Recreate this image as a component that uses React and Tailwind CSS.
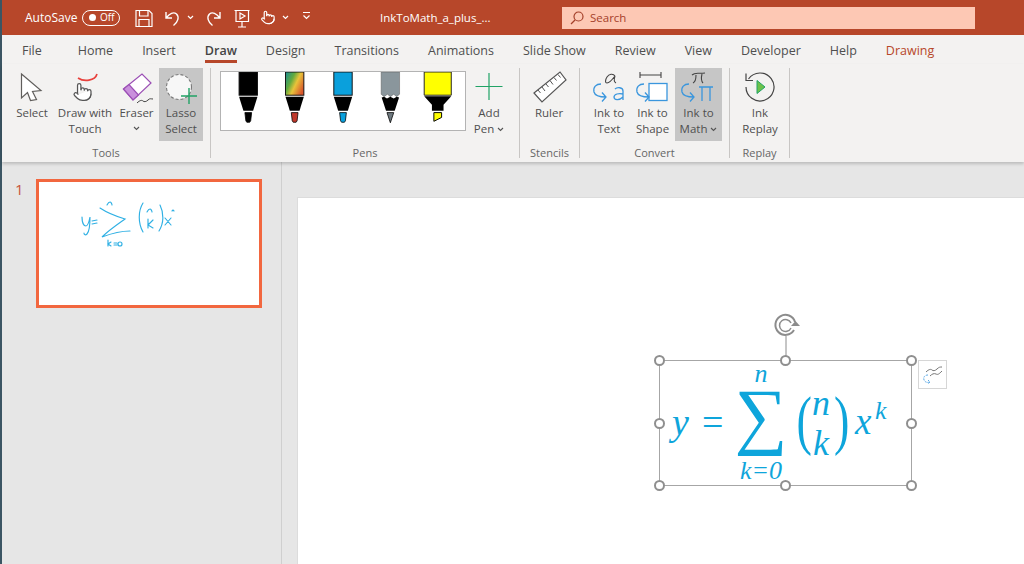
const tabs = ["File", "Home", "Insert", "Draw", "Design", "Transitions", "Animations", "Slide Show", "Review", "View", "Developer", "Help", "Drawing"]

function Chevron({ className = "" }) {
  return (
    <svg width="7" height="5" viewBox="0 0 7 5" className={className}>
      <path d="M1 1l2.5 2.5L6 1" fill="none" stroke="#555" strokeWidth="1.1" />
    </svg>
  )
}

function HandPaths() {
  return (
    <>
      <path d="M22 14a8 8 0 0 1-8 8" />
      <path d="M18 11v-1a2 2 0 0 0-2-2a2 2 0 0 0-2 2" />
      <path d="M14 10V9a2 2 0 0 0-2-2a2 2 0 0 0-2 2v1" />
      <path d="M10 9.5V4a2 2 0 0 0-2-2a2 2 0 0 0-2 2v10" />
      <path d="M18 11a2 2 0 1 1 4 0v3a8 8 0 0 1-8 8h-2c-2.8 0-4.5-.86-5.99-2.34l-3.6-3.6a2 2 0 0 1 2.83-2.82L7 15" />
    </>
  )
}

function TitleIcons() {
  return (
    <svg width="190" height="35" viewBox="130 0 190 35" className="ml-[10px] shrink-0" fill="none" stroke="#fff" strokeWidth="1.2">
      <path d="M136 10.5h13l3 3v13h-16z" />
      <path d="M139.500 10.500v5.500h8.500v-5.500M139 26.500v-7h10v7" />
      <path d="M166 12v6h6M166.500 17.500c3-4 7-6 10-3.500 3 3 1.500 8-3 11.500" strokeWidth="1.4" />
      <path d="M188 16l2.500 2.500 2.500-2.500" />
      <path d="M220 12v6h-6M219.500 17.500c-3-4-7-6-10-3.500-3 3-1.500 8 3 11.500" strokeWidth="1.4" />
      <path d="M234.500 10.500h15M236 10.500v11h12.500v-11M242 21.500v5M238 27h8" />
      <path d="M240 13l5 3-5 3z" />
      <g transform="translate(260.500 10) scale(0.62)" strokeWidth="1.9">
        <HandPaths />
      </g>
      <path d="M283 16l2.500 2.500 2.500-2.500" />
      <path d="M303 12.500h7M303.500 15.500l3 3 3-3" />
    </svg>
  )
}

function Btn({ width, box, lines, active, chevron, children }) {
  return (
    <div className={`${width} ${active ? "bg-[#c6c6c6]" : ""} flex h-[73px] shrink-0 flex-col items-center`}>
      <svg viewBox={box} className="h-[37px] w-full shrink-0" fill="none">
        {children}
      </svg>
      {lines.map((line, i) => (
        <div key={line} className="flex items-center gap-[3px] whitespace-nowrap text-[11.5px] leading-4">
          {line}
          {chevron && i === lines.length - 1 && lines.length > 1 && <Chevron />}
        </div>
      ))}
      {chevron && lines.length === 1 && <Chevron className="mt-[5px]" />}
    </div>
  )
}

function Group({ width, label, padding, children }) {
  return (
    <div className={`${width} flex shrink-0 items-start`}>
      <div className="flex min-w-0 flex-1 flex-col">
        <div className={`${padding} flex h-[73px] items-start`}>{children}</div>
        <div className="mt-[2px] text-center text-[11px] leading-5 text-[#666]">{label}</div>
      </div>
      <div className="h-[90px] w-px shrink-0 bg-[#c8c6c4]" />
    </div>
  )
}

function Pen({ x, body, nib, gradient, jagged, wide }) {
  if (wide) {
    return (
      <g>
        <path d={`M${x - 14} 71h28v24h-28z`} fill={body} stroke="#222" strokeWidth="1" />
        <path d={`M${x - 14} 96h28l-8 9v6h-12v-6z`} fill="#000" />
        <path d={`M${x - 4} 113h8v5l-8 4z`} fill="#ffff00" stroke="#000" strokeWidth="1" />
      </g>
    )
  }
  return (
    <g>
      {jagged ? (
        <>
          <path d={`M${x - 9.500} 71h19v23l-3 2.500-3-2.500-3.500 2.500-3-2.500-3.500 2.500-3-2.500z`} fill={body} stroke="#555" strokeWidth="0.500" />
          <path d={`M${x - 9} 97.500l2.500-1 3 2 3.500-2 3.500 2 3-2 2.500 1-4.500 13.500h-9z`} fill="#000" />
          <path d={`M${x - 3.500} 113h7l-3.500 10.500z`} fill={nib} stroke="#000" strokeWidth="0.800" />
        </>
      ) : (
        <>
          <rect x={x - 9.500} y="71" width="19" height="24" fill={gradient ? "url(#rainbow)" : body} stroke="#111" strokeWidth="1" />
          <path d={`M${x - 9.500} 96.500h19l-4.500 14.500h-10z`} fill="#000" />
          <path d={`M${x - 3.500} 113h7l-1 8.500-1 1.500h-3l-1-1.500z`} fill={nib} stroke="#000" strokeWidth="0.800" />
        </>
      )}
    </g>
  )
}

function BlueArrow({ x, y }) {
  return (
    <path
      d={`M${x + 4} ${y}c-5 0-8 3-7 8 1 4 5 5 12 5M${x + 5} ${y + 8.500}l4 4.500-4 4.500`}
      stroke="#3a96dd"
      strokeWidth="1.3"
    />
  )
}

function Handle({ className }) {
  return <span className={`${className} absolute h-[11px] w-[11px] rounded-full border-2 border-[#8f8f8f] bg-white`} />
}

export default function App() {
  return (
    <div className="relative flex h-[564px] w-[1024px] overflow-hidden bg-[#e6e6e6] font-['Open_Sans',sans-serif] text-[#4f4f4f]">
      <div className="w-[2px] shrink-0 bg-[#3b5563]" />

      <div className="flex min-w-0 flex-1 flex-col">
        {/* title bar */}
        <div className="flex h-[35px] shrink-0 items-center bg-[#b7472a] text-white">
          <span className="ml-[23px] w-[57px] text-[12px]">AutoSave</span>
          <div className="flex h-[16px] w-[38px] items-center rounded-full border border-white pl-[6px]">
            <span className="h-[7px] w-[7px] rounded-full bg-white" />
            <span className="ml-[4px] text-[10px]">Off</span>
          </div>
          <TitleIcons />
          <span className="ml-[60px] w-[182px] text-[11.5px]">InkToMath_a_plus_...</span>
          <div className="flex h-[22px] w-[413px] items-center gap-[6px] bg-[#fdc8b4] pl-[8px] text-[11.5px] text-[#a4402a]">
            <svg width="14" height="14" viewBox="0 0 14 14" fill="none" stroke="#a4402a" strokeWidth="1.200">
              <circle cx="8.500" cy="5.500" r="4.500" />
              <path d="M5 9l-4 4" />
            </svg>
            Search
          </div>
        </div>

        {/* tabs */}
        <div className="flex h-[29px] shrink-0 gap-[29px] bg-[#f3f2f1] pl-[20px] text-[12.5px]">
          {tabs.map((tab) => (
            <div
              key={tab}
              className={`${tab === "Draw" ? "border-[#b7472a] font-semibold text-[#444]" : "border-transparent"} ${tab === "Drawing" ? "text-[#b7472a]" : ""} ${tab === "Home" ? "ml-[7px]" : ""} h-[28px] whitespace-nowrap border-b-[3px] pt-[6px] leading-[19px]`}
            >
              {tab}
            </div>
          ))}
        </div>

        {/* ribbon */}
        <div className="z-10 flex h-[98px] shrink-0 bg-[#f3f2f1] pt-[4px] shadow-[0_2px_3px_rgba(0,0,0,0.18)]">
          <Group width="w-[209px]" label="Tools" padding="pl-[10px]">
            <Btn width="w-[40px]" box="12 68 40 37" lines={["Select"]}>
              <path d="M21.500 74l19.500 16.500-8.500 1 4 8-6 1-3-8-6 5.500z" fill="#fff" stroke="#605e5c" strokeWidth="1.200" />
            </Btn>
            <Btn width="w-[58px] ml-[4px]" box="56 68 58 37" lines={["Draw with", "Touch"]}>
              <path d="M78 78c6 4 17 3 19-4" stroke="#e8413c" strokeWidth="1.700" />
              <g transform="translate(72.500 82) scale(0.84)" stroke="#555" strokeWidth="1.500" fill="#fff">
                <HandPaths />
              </g>
            </Btn>
            <Btn width="w-[45px]" box="114 68 45 37" lines={["Eraser"]} chevron>
              <path d="M123.500 89L142 74l9 9-18 17z" fill="#fff" stroke="#9b4fb5" strokeWidth="1.200" />
              <path d="M123.500 89l5.500-4.500 9.500 10.500-5.500 5z" fill="#c990dc" stroke="#9b4fb5" strokeWidth="1.200" />
              <path d="M137 103c3-3 5-3 6-2s3 1 5-1 3-1 5-1" stroke="#444" strokeWidth="1" />
            </Btn>
            <Btn width="w-[44px]" box="159 68 44 37" lines={["Lasso", "Select"]} active>
              <circle cx="179" cy="87" r="12.500" fill="#f7f7f7" stroke="#7a7a7a" strokeWidth="1.100" strokeDasharray="3 2" />
              <path d="M189 88v16M181 96h16" stroke="#21a366" strokeWidth="1.400" />
            </Btn>
          </Group>

          <Group width="w-[309px]" label="Pens" padding="pl-[9px]">
            <svg viewBox="220 71 246 60" className="mt-[3px] h-[60px] w-[246px] shrink-0 border border-[#b3b3b3] bg-white">
              <defs>
                <linearGradient id="rainbow" x1="0" y1="0.1" x2="1" y2="0.7">
                  <stop offset="0" stopColor="#1f8f8a" />
                  <stop offset="0.35" stopColor="#62ab3e" />
                  <stop offset="0.6" stopColor="#e8c33a" />
                  <stop offset="1" stopColor="#d9552b" />
                </linearGradient>
              </defs>
              <Pen x={245} body="#000" nib="#000" />
              <Pen x={293} gradient nib="#c0392b" />
              <Pen x={343} body="#0aa0dc" nib="#0aa0dc" />
              <Pen x={392} body="#8a969c" nib="#6f7a80" jagged />
              <Pen x={441} body="#ffff00" wide />
            </svg>
            <Btn width="w-[38px] ml-[4px]" box="470 68 38 37" lines={["Add", "Pen"]} chevron>
              <path d="M489 73v27M475.500 86.500h27" stroke="#21a366" strokeWidth="1.200" />
            </Btn>
          </Group>

          <Group width="w-[60px]" label="Stencils" padding="pl-[8px]">
            <Btn width="w-[42px]" box="528 68 42 37" lines={["Ruler"]}>
              <path d="M534 93l26-21 6 8-24 22z" fill="#fff" stroke="#555" strokeWidth="1.200" />
              <path d="M538 90l2.500 3M542 87l3 4M546 84l2.500 3M550 80.500l3 4M554 77.500l2.500 3M558 74.500l2.500 3" stroke="#555" strokeWidth="1" />
            </Btn>
          </Group>

          <Group width="w-[150px]" label="Convert" padding="pl-[9px]">
            <Btn width="w-[40px]" box="589 68 40 37" lines={["Ink to", "Text"]}>
              <path d="M615 76c-2-3-6-2-8 1s-2 6 0 6 5-3 8-7c-1 3-1 6 1 7" stroke="#444" strokeWidth="1.100" />
              <BlueArrow x={597} y={84} />
              <path d="M615 89c2-2 8-2 8 2v9M623 94c-4-1-9 0-9 3s5 4 9 0" stroke="#3a96dd" strokeWidth="1.300" />
            </Btn>
            <Btn width="w-[41px] ml-[3px]" box="632 68 41 37" lines={["Ink to", "Shape"]}>
              <path d="M640 75h21M640 72v6M661 72v6" stroke="#444" strokeWidth="1.100" />
              <rect x="649" y="83.500" width="18" height="17" fill="#fff" stroke="#3a96dd" strokeWidth="1.300" />
              <BlueArrow x={640} y={84} />
            </Btn>
            <Btn width="w-[47px] ml-[2px]" box="675 68 47 37" lines={["Ink to", "Math"]} active chevron>
              <path d="M692 75c3-3 6-1 13-2M696 75c0 4-1 7-3 8M702 74c-1 4-1 7 1 9" stroke="#444" strokeWidth="1.100" />
              <BlueArrow x={685} y={84} />
              <path d="M699 87h14M702 87v14M710 87v14" stroke="#3a96dd" strokeWidth="1.300" />
            </Btn>
          </Group>

          <Group width="w-[60px]" label="Replay" padding="pl-[10px]">
            <Btn width="w-[40px]" box="740 68 40 37" lines={["Ink", "Replay"]}>
              <path d="M748.500 80a14 14 0 1 1-2.500 8" stroke="#444" strokeWidth="1.200" transform="translate(0 -1)" />
              <path d="M746 73.500v7h7" stroke="#444" strokeWidth="1.200" />
              <path d="M757 80.500l8 6.500-8 6.500z" fill="#6cc24a" stroke="#21a366" strokeWidth="1" />
            </Btn>
          </Group>
        </div>

        {/* workspace */}
        <div className="flex min-h-0 flex-1">
          <div className="flex w-[280px] shrink-0 border-r border-[#cfcfcf] pl-[13px] pt-[17px]">
            <span className="w-[21px] text-[15px] leading-[20px] text-[#c8553a]">1</span>
            <div className="h-[129px] w-[226px] border-[3px] border-[#f2673f] bg-white">
              <svg viewBox="39 182 220 123" className="h-full w-full" fill="none" stroke="#2fb0e4" strokeWidth="1.150" strokeLinecap="round">
                <path d="M82 217c0 6 2 9 4 9s3-4 4-9c0 7-1 15-3 17s-3 0-3-1" />
                <path d="M92 221l5-1M92 224l5-1" />
                <path d="M100 208c6 4 15 8 25 11-7 5-16 11-23 18 8-3 18-6 28-6" />
                <path d="M107 205c1-2 2-3 3-3s2 2 2 3" />
                <path d="M108 240v6M111 242l-3 2 3 2M114 243h3M114 245h3M120 242c-1 0-2 1-2 2s1 2 2 2 2-1 2-2-1-2-2-2z" />
                <path d="M143 203c-5 8-5 20 0 29M160 205c4 8 4 18-1 26" />
                <path d="M147 212c1-2 2-3 3-3s2 2 2 3M148 219v9M153 220l-5 5 5 3" />
                <path d="M165 218l6 7M171 218l-6 7M172 211l1-1 1 1" />
              </svg>
            </div>
          </div>

          <div className="flex min-w-0 flex-1 pl-[15px] pt-[35px]">
            <div className="relative flex-1 border-l border-t border-[#dcdcdc] bg-white">
              {/* rotate handle and its stem */}
              <svg width="30" height="47" viewBox="771 312 30 47" className="absolute left-[473px] top-[114px]" fill="none" stroke="#8c8c8c">
                <path d="M786 336v23" strokeWidth="1" />
                <path d="M795 322a10 10 0 1 0-1 8" strokeWidth="2" />
                <path d="M791 323a6 6 0 1 0 0 5" strokeWidth="1.500" />
                <path d="M791 326h9l-4.500-5z" fill="#8c8c8c" stroke="none" />
              </svg>

              {/* selected equation */}
              <div className="absolute left-[361px] top-[162px] flex h-[126px] w-[253px] items-center border border-[#a6a6a6] pl-[12px] font-['Liberation_Serif',serif] text-[#0ea5db]">
                <span className="w-[30px] pb-[3px] text-[38px] italic leading-none">y</span>
                <span className="w-[34px] pb-[3px] text-[38px] leading-none">=</span>
                <div className="flex w-[50px] flex-col items-center">
                  <span className="text-[26px] italic leading-[20px]">n</span>
                  <span className="pb-[12px] text-[74px] leading-[63px]">∑</span>
                  <span className="whitespace-nowrap text-[26px] italic leading-[24px]">k=0</span>
                </div>
                <span className="ml-[8px] w-[16px] scale-x-[0.7] pb-[6px] text-[66px] leading-none">(</span>
                <div className="flex w-[22px] flex-col items-center text-[36px] italic leading-[40px]">
                  <span>n</span>
                  <span>k</span>
                </div>
                <span className="w-[13px] scale-x-[0.7] pb-[6px] text-[66px] leading-none">)</span>
                <span className="ml-[10px] w-[20px] pb-[3px] text-[37px] italic leading-none">x</span>
                <span className="mb-[24px] text-[26px] italic leading-none">k</span>

                <Handle className="-left-[6px] -top-[6px]" />
                <Handle className="left-[120px] -top-[6px]" />
                <Handle className="-right-[6px] -top-[6px]" />
                <Handle className="-left-[6px] top-[57px]" />
                <Handle className="-right-[6px] top-[57px]" />
                <Handle className="-left-[6px] -bottom-[6px]" />
                <Handle className="left-[120px] -bottom-[6px]" />
                <Handle className="-right-[6px] -bottom-[6px]" />
              </div>

              {/* ink convert chip */}
              <div className="absolute left-[620px] top-[162px] flex h-[29px] w-[29px] items-center justify-center border border-[#d6d6d6] bg-white">
                <svg width="22" height="20" viewBox="0 0 22 20" fill="none" strokeWidth="1">
                  <path d="M4 7c3-3 5-3 6-2s3 1 5-1 3-2 5-2M8 11c2-2 4-3 6-2s3 0 6-3" stroke="#777" />
                  <path d="M6 10c-3 0-5 2-4 5 1 2 3 3 6 2M6 15l2 2-2 2" stroke="#5aa9e6" strokeDasharray="2 1" />
                </svg>
              </div>
            </div>
          </div>
        </div>
      </div>
    </div>
  )
}
